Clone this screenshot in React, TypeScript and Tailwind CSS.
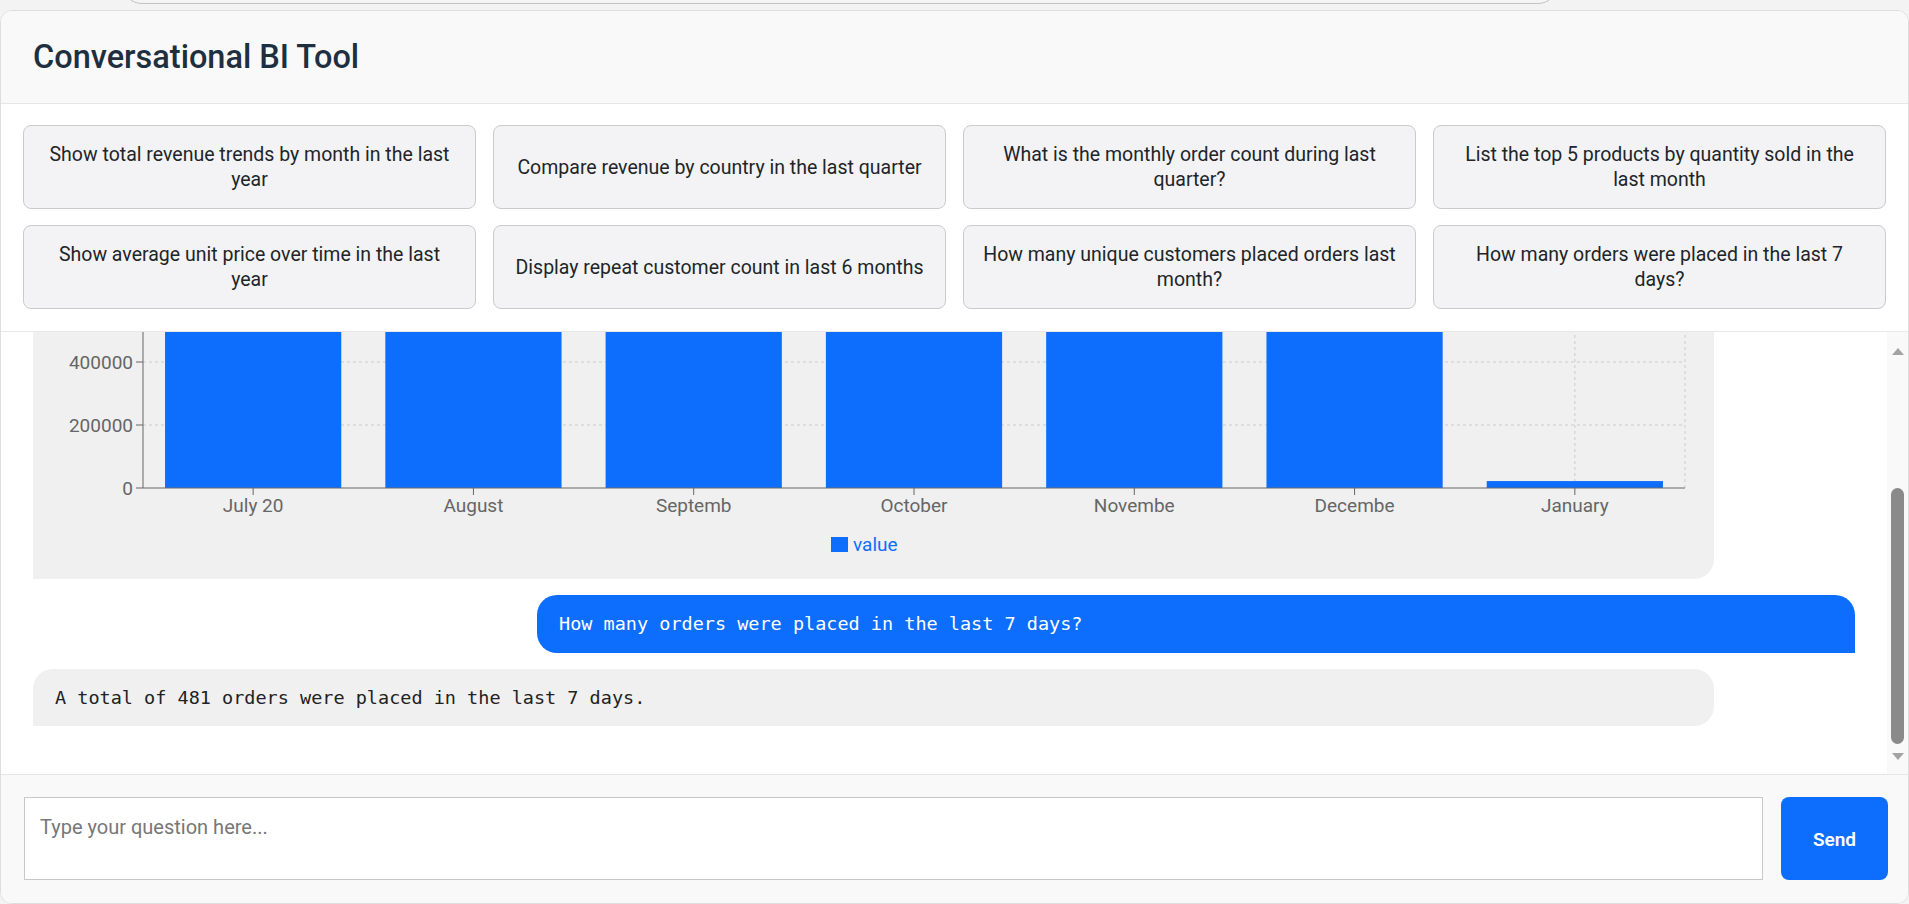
import React from "react";

const suggestions = [
  "Show total revenue trends by month in the last\nyear",
  "Compare revenue by country in the last quarter",
  "What is the monthly order count during last\nquarter?",
  "List the top 5 products by quantity sold in the\nlast month",
  "Show average unit price over time in the last\nyear",
  "Display repeat customer count in last 6 months",
  "How many unique customers placed orders last\nmonth?",
  "How many orders were placed in the last 7\ndays?",
];

const months = ["July 20", "August", "Septemb", "October", "Novembe", "Decembe", "January"];
const values = [820000, 840000, 800000, 860000, 880000, 900000, 22000];

function Chart() {
  const W = 1681;
  const H = 440;
  const x0 = 110;
  const x1 = 1652;
  const y0 = 349;
  const top = 34;
  const cw = (x1 - x0) / 7;
  const ys = (v: number) => y0 - (v * 63) / 200000;
  const grid = [200000, 400000, 600000, 800000, 1000000];
  const font = "Roboto, 'Liberation Sans', sans-serif";
  return (
    <svg width={W} height={H} className="block">
      {grid.map((g) => (
        <line key={g} x1={x0} x2={x1} y1={ys(g)} y2={ys(g)} stroke="#cccccc" strokeDasharray="3 3" />
      ))}
      {months.map((_, i) => (
        <line key={i} x1={x0 + cw * (i + 0.5)} x2={x0 + cw * (i + 0.5)} y1={top} y2={y0} stroke="#cccccc" strokeDasharray="3 3" />
      ))}
      <line x1={x1} x2={x1} y1={top} y2={y0} stroke="#cccccc" strokeDasharray="3 3" />
      {values.map((v, i) => (
        <rect key={i} x={x0 + cw * i + cw * 0.1} y={ys(v)} width={cw * 0.8} height={y0 - ys(v)} fill="#0d6efd" />
      ))}
      <line x1={x0} x2={x0} y1={top} y2={y0} stroke="#666666" />
      <line x1={x0} x2={x1} y1={y0} y2={y0} stroke="#666666" />
      {[600000, 800000, 1000000].map((g) => (
        <line key={g} x1={x0 - 7} x2={x0} y1={ys(g)} y2={ys(g)} stroke="#666666" />
      ))}
      {[0, 200000, 400000].map((g) => (
        <g key={g}>
          <line x1={x0 - 7} x2={x0} y1={ys(g)} y2={ys(g)} stroke="#666666" />
          <text x={x0 - 10} y={ys(g)} textAnchor="end" dominantBaseline="central" fontSize="19" fill="#666666" fontFamily={font}>
            {g}
          </text>
        </g>
      ))}
      {months.map((m, i) => (
        <g key={m}>
          <line x1={x0 + cw * (i + 0.5)} x2={x0 + cw * (i + 0.5)} y1={y0} y2={y0 + 7} stroke="#666666" />
          <text x={x0 + cw * (i + 0.5)} y={y0 + 17} textAnchor="middle" dominantBaseline="central" fontSize="19" fill="#666666" fontFamily={font}>
            {m}
          </text>
        </g>
      ))}
      <rect x={798} y={398} width={17} height={15} fill="#0d6efd" />
      <text x={820} y={405} dominantBaseline="central" fontSize="19" fill="#0d6efd" fontFamily={font}>
        value
      </text>
    </svg>
  );
}

export default function App() {
  return (
    <div className="h-[904px] w-[1909px] overflow-hidden bg-[#f3f3f3] flex flex-col [font-family:Roboto,'Liberation_Sans',sans-serif]">
      <div className="h-[10px] shrink-0 overflow-hidden">
        <div className="h-[30px] -mt-[26px] ml-[122px] w-[1436px] border border-[#c2c2c2] rounded-b-[20px] bg-[#f5f5f5]" />
      </div>
      <div className="flex-1 min-h-0 flex flex-col bg-white border border-[#dedede] rounded-[12px] overflow-hidden">
        <div className="h-[93px] shrink-0 bg-[#f9f9f9] border-b border-[#e6e6e6] flex items-center px-[32px]">
          <h1 className="text-[32.5px] font-medium text-[#1e2f40] leading-none">Conversational BI Tool</h1>
        </div>
        <div className="shrink-0 border-b border-[#e8e8e8] px-[22px] pt-[21px] pb-[22px]">
          <div className="grid grid-cols-4 gap-x-[17px] gap-y-[16px]">
            {suggestions.map((s) => (
              <button
                key={s}
                className="h-[84px] flex items-center justify-center text-center whitespace-pre-line bg-[#f3f3f5] border border-[#cacaca] rounded-[8px] px-3 text-[19.5px] leading-[25px] font-normal text-[#212529]"
              >
                {s}
              </button>
            ))}
          </div>
        </div>
        <div className="flex-1 min-h-0 flex">
          <div className="flex-1 min-w-0 overflow-hidden flex flex-col justify-end gap-4 px-[32px] pb-[48px]">
            <div className="shrink-0 w-[1681px] bg-[#f0f0f0] rounded-[20px] rounded-bl-none overflow-hidden">
              <Chart />
            </div>
            <div className="shrink-0 self-end w-[1318px] bg-[#0d6efd] text-white rounded-[20px] rounded-br-none px-[22px] py-[16px] leading-[26px] text-[18.5px] [font-family:'DejaVu_Sans_Mono',monospace]">
              How many orders were placed in the last 7 days?
            </div>
            <div className="shrink-0 w-[1681px] bg-[#f0f0f0] text-[#222222] rounded-[20px] rounded-bl-none px-[22px] py-[16px] leading-[25px] text-[18.5px] [font-family:'DejaVu_Sans_Mono',monospace]">
              A total of 481 orders were placed in the last 7 days.
            </div>
          </div>
          <div className="w-[21px] shrink-0 bg-[#f9f9f9] flex flex-col items-center pt-[16px] pb-[14px]">
            <div className="w-0 h-0 border-l-[6px] border-r-[6px] border-b-[7px] border-l-transparent border-r-transparent border-b-[#a3a3a3]" />
            <div className="flex-1 w-full flex flex-col items-center pt-[133px] pb-[9px]">
              <div className="w-[13px] flex-1 rounded-full bg-[#8a8a8a]" />
            </div>
            <div className="w-0 h-0 border-l-[6px] border-r-[6px] border-t-[7px] border-l-transparent border-r-transparent border-t-[#a3a3a3]" />
          </div>
        </div>
        <div className="shrink-0 h-[129px] border-t border-[#e6e6e6] bg-[#f9f9f9] flex items-start gap-[18px] pl-[23px] pr-[20px] pt-[22px]">
          <textarea
            placeholder="Type your question here..."
            className="flex-1 h-[83px] resize-none bg-white border border-[#c8c8c8] px-[15px] py-[17px] text-[20px] leading-[25px] text-[#212529] placeholder:text-[#777777] outline-none"
          />
          <button className="w-[107px] h-[83px] shrink-0 bg-[#0d6efd] text-white rounded-[8px] text-[19px] font-semibold pt-[3px]">
            Send
          </button>
        </div>
      </div>
    </div>
  );
}
